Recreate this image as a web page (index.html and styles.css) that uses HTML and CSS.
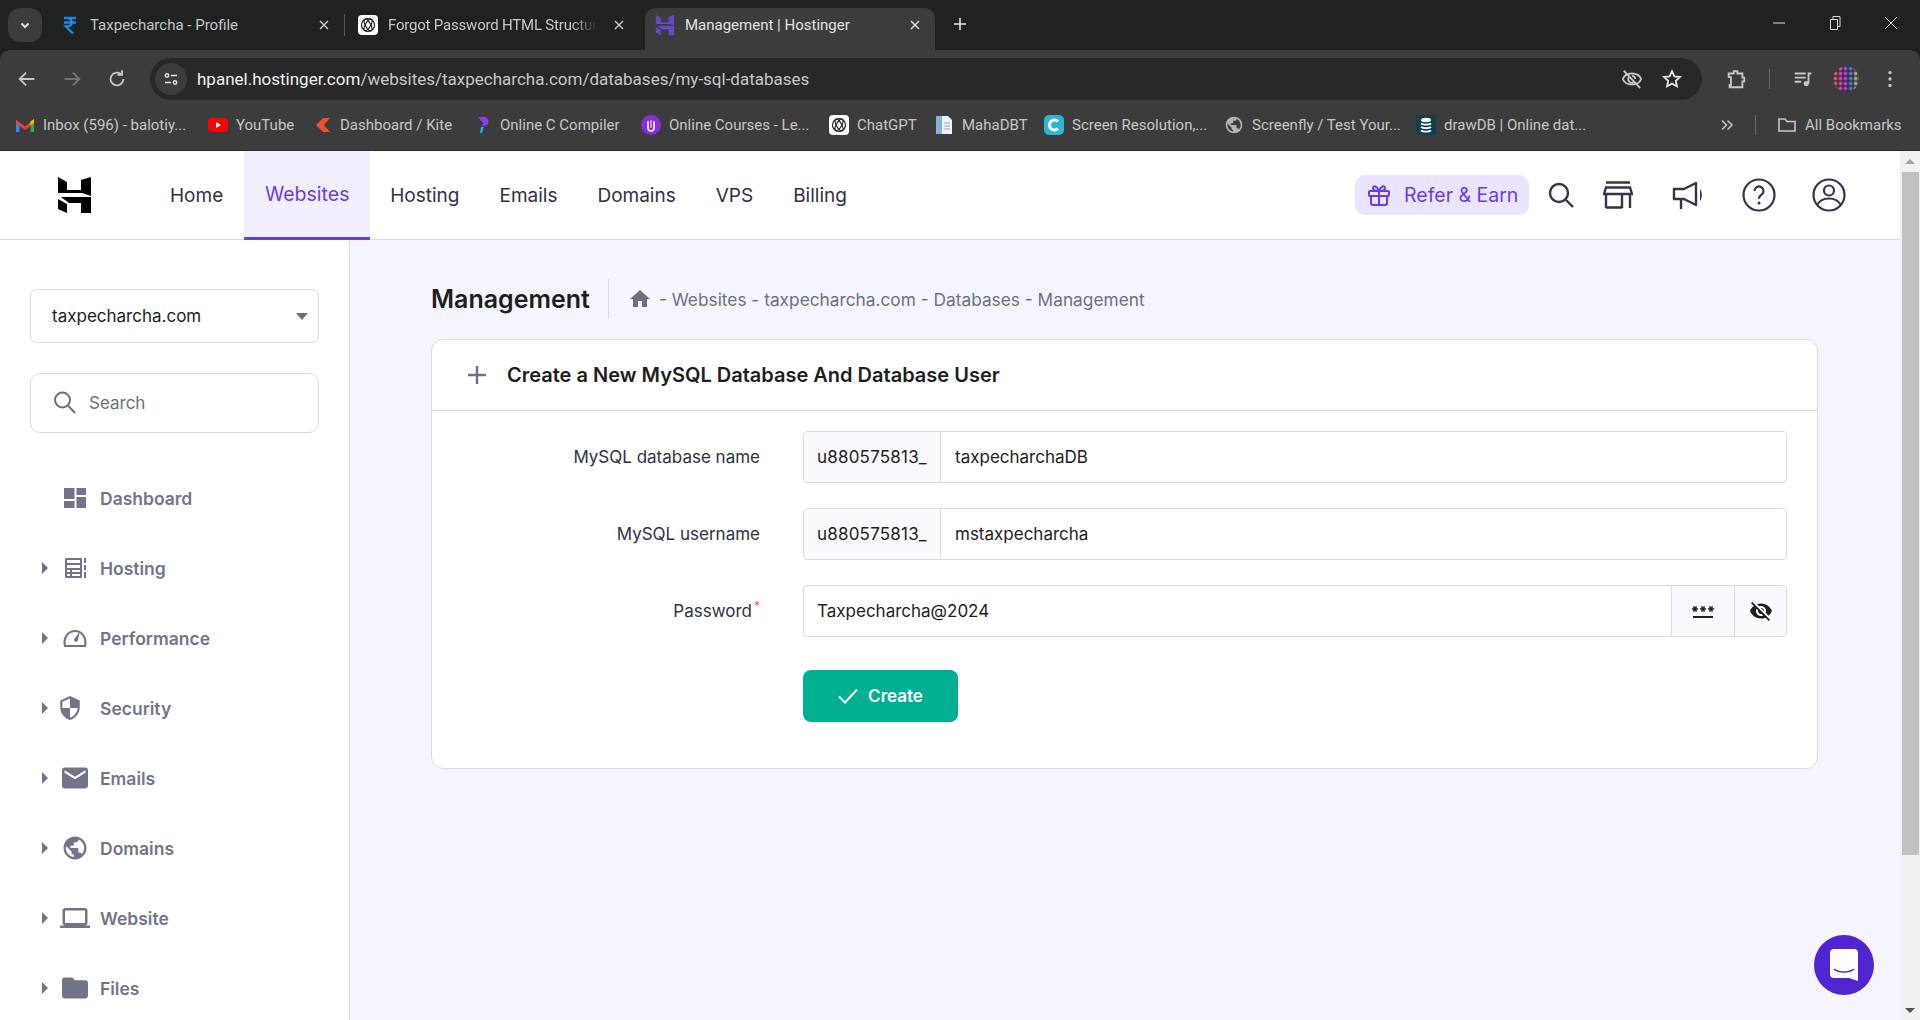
FILE: index.html
```
<!DOCTYPE html>
<html lang="en">

<head>
    <meta charset="UTF-8">
    <title>Management | Hostinger</title>
    <link rel="stylesheet" href="styles.css">
</head>

<body>

    <!-- browser chrome -->
    <div class="tabstrip">
        <button class="tab-search"><svg class="ico-12" viewBox="0 0 12 12"><path d="M2.500 4.500 6 8l3.500-3.500" fill="none" stroke="#e3e3e3" stroke-width="2"/></svg></button>
        <div class="tab tab-first">
            <svg class="rupee" viewBox="0 0 14 18"><path d="M1 2h12M1 6.500h12M4 2c6 0 7 8.500-1 8.500l7 7" fill="none" stroke="#1e88e5" stroke-width="2.400"/></svg>
            <span class="tab-title">Taxpecharcha - Profile</span>
            <svg class="tab-close" viewBox="0 0 12 12"><path d="M2 2l8 8M10 2l-8 8" stroke="#d0d0d0" stroke-width="1.400"/></svg>
        </div>
        <div class="tab-sep"></div>
        <div class="tab tab-second">
            <svg class="fav-20" viewBox="0 0 20 20"><rect width="20" height="20" rx="4" fill="#fff"/><g fill="none" stroke="#222" stroke-width="1.200"><circle cx="10" cy="10" r="6.500"/><ellipse cx="10" cy="10" rx="6.500" ry="2.600" transform="rotate(60 10 10)"/><ellipse cx="10" cy="10" rx="6.500" ry="2.600" transform="rotate(-60 10 10)"/></g></svg>
            <span class="tab-title tab-title-fade">Forgot Password HTML Structur</span>
            <svg class="tab-close" viewBox="0 0 12 12"><path d="M2 2l8 8M10 2l-8 8" stroke="#d0d0d0" stroke-width="1.400"/></svg>
        </div>
        <div class="tab tab-active">
            <svg class="fav-20" viewBox="0 0 33 36"><path d="M0 0l9 5v8h14V3l10-3v19l-9-3H0zM3 20h30v16H23V26H11zM0 22l9 5v9l-9-4z" fill="#6747c7"/></svg>
            <span class="tab-title">Management | Hostinger</span>
            <svg class="tab-close" viewBox="0 0 12 12"><path d="M2 2l8 8M10 2l-8 8" stroke="#e3e3e3" stroke-width="1.400"/></svg>
        </div>
        <svg class="new-tab" viewBox="0 0 14 14"><path d="M7 1v12M1 7h12" stroke="#e3e3e3" stroke-width="1.600"/></svg>
        <div class="win-controls">
            <svg class="ico-12" viewBox="0 0 12 12"><path d="M0 6h12" stroke="#ddd"/></svg>
            <svg class="ico-14" viewBox="0 0 14 14"><path d="M2.500 3.500h7v10h-7zM5 3.500V.5h7v10H9.500" fill="none" stroke="#ddd"/></svg>
            <svg class="ico-12" viewBox="0 0 12 12"><path d="M0 0l12 12M12 0L0 12" stroke="#ddd"/></svg>
        </div>
    </div>

    <div class="toolbar">
        <svg class="tool-ico tool-back" viewBox="0 0 24 24"><path d="M20 12H5M11 5l-7 7 7 7" fill="none" stroke="#c7c7c7" stroke-width="2"/></svg>
        <svg class="tool-ico tool-fwd" viewBox="0 0 24 24"><path d="M4 12h15M13 5l7 7-7 7" fill="none" stroke="#757575" stroke-width="2"/></svg>
        <svg class="tool-ico tool-reload" viewBox="0 0 24 24"><path d="M19 12a7 7 0 1 1-2.200-5.100M17.500 2.500v5h-5" fill="none" stroke="#c7c7c7" stroke-width="2"/></svg>
        <div class="omnibox">
            <span class="site-info"><svg class="ico-16" viewBox="0 0 16 16"><g fill="none" stroke="#e3e3e3" stroke-width="1.500"><circle cx="4" cy="4.500" r="1.700"/><path d="M8 4.500h6M2 11.500h6"/><circle cx="12" cy="11.500" r="1.700"/></g></svg></span>
            <span class="url"><b>hpanel.hostinger.com</b>/websites/taxpecharcha.com/databases/my-sql-databases</span>
            <svg class="tool-ico omni-eye" viewBox="0 0 24 24"><g fill="none" stroke="#c7c7c7" stroke-width="2"><path d="M2 12c3-8 17-8 20 0-3 8-17 8-20 0z"/><path d="M8.500 10a4 4 0 0 0 5.500 5.500M12 8.500a3.500 3.500 0 0 1 3.500 3.500"/><path d="M3 3l18 19"/></g></svg>
            <svg class="tool-ico omni-star" viewBox="0 0 24 24"><path d="M12 3.500l2.600 5.600 6.100.7-4.500 4.200 1.200 6L12 17l-5.400 3 1.200-6-4.500-4.200 6.100-.7z" fill="none" stroke="#e3e3e3" stroke-width="2"/></svg>
        </div>
        <svg class="tool-ico tool-ext" viewBox="0 0 24 24"><path d="M4 6h5.500V3.500h4V6H19v4.500h2v4h-2V21H5v-2.500h1.500V10H4z" fill="none" stroke="#c7c7c7" stroke-width="2"/></svg>
        <div class="tool-sep"></div>
        <svg class="tool-ico tool-media" viewBox="0 0 24 24"><path d="M3 6h12M3 10.500h12M3 15h7" stroke="#c7c7c7" stroke-width="2"/><path d="M17 6h4M18 6v11" stroke="#c7c7c7" stroke-width="2"/><circle cx="15.500" cy="17" r="2.800" fill="#c7c7c7"/></svg>
        <span class="avatar"></span>
        <svg class="tool-ico tool-dots" viewBox="0 0 24 24"><circle cx="12" cy="5" r="1.800" fill="#c7c7c7"/><circle cx="12" cy="12" r="1.800" fill="#c7c7c7"/><circle cx="12" cy="19" r="1.800" fill="#c7c7c7"/></svg>
    </div>

    <div class="bookmarks">
        <a class="bm bm-inbox"><svg class="fav-20" viewBox="0 0 20 20"><path d="M1 5v12h3.500V9z" fill="#4285f4"/><path d="M19 5v12h-3.500V9z" fill="#34a853"/><path d="M1 4.500l9 7 9-7v4l-9 6.500-9-6.500z" fill="#ea4335"/><path d="M15.500 6.500L19 4v4l-3.500 2.500z" fill="#fbbc04"/></svg><span>Inbox (596) - balotiy...</span></a>
        <a class="bm bm-yt"><svg class="fav-20" viewBox="0 0 20 20"><rect y="3" width="20" height="14" rx="4" fill="#f00"/><path d="M8 7l5 3-5 3z" fill="#fff"/></svg><span>YouTube</span></a>
        <a class="bm bm-kite"><svg class="fav-20" viewBox="0 0 20 20"><path d="M11 3h7l-6 7 6 7h-7l-7-7z" fill="#e8512a"/></svg><span>Dashboard / Kite</span></a>
        <a class="bm bm-c"><svg class="fav-20" viewBox="0 0 20 20"><path d="M6 2h6a4 4 0 0 1 0 9H9l3-3h-1L6 2z" fill="#8c3df0"/><path d="M9 12h3l-2 6H8z" fill="#2aa7f0"/></svg><span>Online C Compiler</span></a>
        <a class="bm bm-u"><svg class="fav-20" viewBox="0 0 20 20"><circle cx="10" cy="10" r="10" fill="#8a2be2"/><path d="M7 6v7a3 3 0 0 0 6 0V6" fill="none" stroke="#fff" stroke-width="1.600"/><path d="M10 5v8" stroke="#fff" stroke-width="1"/></svg><span>Online Courses - Le...</span></a>
        <a class="bm bm-gpt"><svg class="fav-20" viewBox="0 0 20 20"><rect width="20" height="20" rx="4" fill="#fff"/><g fill="none" stroke="#222" stroke-width="1.200"><circle cx="10" cy="10" r="6.500"/><ellipse cx="10" cy="10" rx="6.500" ry="2.600" transform="rotate(60 10 10)"/><ellipse cx="10" cy="10" rx="6.500" ry="2.600" transform="rotate(-60 10 10)"/></g></svg><span>ChatGPT</span></a>
        <a class="bm bm-maha"><svg class="fav-20" viewBox="0 0 20 20"><path d="M2 1h12l4 4v14H2z" fill="#eef2f7"/><path d="M2 1h6v18H2z" fill="#7fb2dc"/><path d="M10 8h6M10 11h6M10 14h6" stroke="#9aa7b5"/></svg><span>MahaDBT</span></a>
        <a class="bm bm-screen"><svg class="fav-20" viewBox="0 0 20 20"><rect width="20" height="20" rx="5" fill="#29b6d8"/><path d="M14 6.500a5 5 0 1 0 0 7" fill="none" stroke="#fff" stroke-width="3"/></svg><span>Screen Resolution,...</span></a>
        <a class="bm bm-fly"><svg class="fav-20" viewBox="0 0 24 24"><path d="M12 2a10 10 0 1 0 0 20 10 10 0 0 0 0-20zm-1 17.900A8 8 0 0 1 4.200 10.200L9 15v1c0 1.100.9 2 2 2zm6.900-2.500c-.3-.8-1-1.400-1.900-1.400h-1v-3c0-.6-.4-1-1-1H8v-2h2c.6 0 1-.4 1-1V7h2c1.100 0 2-.9 2-2v-.4a8 8 0 0 1 2.900 12.800z" fill="#b5b5b5"/></svg><span>Screenfly / Test Your...</span></a>
        <a class="bm bm-draw"><svg class="fav-20" viewBox="0 0 20 20"><rect width="20" height="20" fill="#123f4f"/><ellipse cx="10" cy="5" rx="5" ry="2.200" fill="#fff"/><path d="M5 8.500c2 1.600 8 1.600 10 0M5 12c2 1.600 8 1.600 10 0M5 15.500c2 1.600 8 1.600 10 0" fill="none" stroke="#fff" stroke-width="1.800"/></svg><span>drawDB | Online dat...</span></a>
        <svg class="bm-more" viewBox="0 0 14 14"><path d="M2 2.500L6.500 7 2 11.500M7.500 2.500L12 7l-4.500 4.500" fill="none" stroke="#c7c7c7" stroke-width="1.500"/></svg>
        <div class="bm-sep"></div>
        <a class="bm bm-all"><svg class="fav-20" viewBox="0 0 20 20"><path d="M2 4h6l2 2.500h8V16H2z" fill="none" stroke="#c7c7c7" stroke-width="1.600"/></svg><span>All Bookmarks</span></a>
    </div>

    <!-- page -->
    <div class="viewport">
        <div class="page">
            <header class="topbar">
                <svg class="logo" viewBox="0 0 33 36"><path d="M0 0l9 5v8h14V3l10-3v19l-9-3H0zM3 20h30v16H23V26H11zM0 22l9 5v9l-9-4z" fill="#000"/></svg>
                <nav class="main-nav">
                    <a>Home</a>
                    <a class="current">Websites</a>
                    <a>Hosting</a>
                    <a>Emails</a>
                    <a>Domains</a>
                    <a>VPS</a>
                    <a>Billing</a>
                </nav>
                <div class="top-actions">
                    <a class="refer">
                        <svg class="ico-24" viewBox="0 0 24 24"><g fill="none" stroke="#673de6" stroke-width="2"><rect x="2" y="8" width="20" height="5" rx="1"/><path d="M4 13v7a2 2 0 0 0 2 2h12a2 2 0 0 0 2-2v-7M12 8v14M12 8C10 3 6 2 6 5c0 2 3 3 6 3zm0 0c2-5 6-6 6-3 0 2-3 3-6 3z"/></g></svg>
                        Refer &amp; Earn
                    </a>
                    <svg class="act act-search" viewBox="0 0 26 26"><g fill="none" stroke="#36344d" stroke-width="2.400"><circle cx="11" cy="11" r="9"/><path d="M18 18l7 7"/></g></svg>
                    <svg class="act act-store" viewBox="0 0 30 28"><g fill="none" stroke="#36344d" stroke-width="2.400"><path d="M3 1.500h24M3 6.500h24l2 6.500H1zM3 13v14M27 13v14M3 26.500h16M19 13v14"/></g></svg>
                    <svg class="act act-mega" viewBox="0 0 32 30"><g fill="none" stroke="#36344d" stroke-width="2.400" stroke-linejoin="round"><path d="M2 9h10l12-6v22l-12-6H2zM9 19v10"/></g><path d="M28 9c2.500 3 2.500 9 0 12z" fill="#36344d"/></svg>
                    <svg class="act act-help" viewBox="0 0 34 34"><circle cx="17" cy="17" r="15.500" fill="none" stroke="#36344d" stroke-width="2.200"/><path d="M12.500 13a4.500 4.500 0 1 1 7 3.700c-1.700 1.100-2.500 2-2.500 4" fill="none" stroke="#36344d" stroke-width="2.200"/><circle cx="17" cy="25" r="1.500" fill="#36344d"/></svg>
                    <svg class="act act-user" viewBox="0 0 34 34"><g fill="none" stroke="#36344d" stroke-width="2.200"><circle cx="17" cy="17" r="15.500"/><circle cx="17" cy="12.500" r="5"/><path d="M5 27c3-5 8-6.500 12-6.500S26 22 29 27"/></g></svg>
                </div>
            </header>

            <div class="layout">
                <aside class="sidebar">
                    <div class="domain-select">
                        <span>taxpecharcha.com</span>
                        <i class="caret-down"></i>
                    </div>
                    <div class="side-search">
                        <svg class="ico-24" viewBox="0 0 24 24"><g fill="none" stroke="#6d7081" stroke-width="2"><circle cx="9.500" cy="9" r="7.500"/><path d="M15 14.500l7 7.500"/></g></svg>
                        <span>Search</span>
                    </div>
                    <ul class="side-menu">
                        <li><i class="caret-none"></i><svg class="side-ico" viewBox="0 0 24 24"><path d="M1 2h10.500v11H1zM1 15h10.500v7H1zM13.500 2H23v7h-9.500zM13.500 11H23v11h-9.500z"/></svg>Dashboard</li>
                        <li><i class="caret-right"></i><svg class="side-ico" viewBox="0 0 24 24"><path fill-rule="evenodd" d="M3 2h15a1 1 0 0 1 1 1v18a1 1 0 0 1-1 1H3a1 1 0 0 1-1-1V3a1 1 0 0 1 1-1zm1 2v3h13V4zm0 5v3h13V9zm0 5v2h3v-2zm5 0v2h8v-2zm-5 4v2h3v-2zm5 0v2h8v-2zM21 2h2v5h-2zm0 7h2v5h-2zm0 7h2v6h-2z"/></svg>Hosting</li>
                        <li><i class="caret-right"></i><svg class="side-ico" viewBox="0 0 24 24"><path d="M17 5l-5 7a2 2 0 1 0 3 2z"/><path d="M2 21h20c2-8-3-15-10-15S0 13 2 21z" transform="translate(0 -1)" fill="none" stroke="#72758a" stroke-width="2.200"/></svg>Performance</li>
                        <li class="shift"><i class="caret-right"></i><svg class="side-ico" viewBox="0 0 24 24"><path d="M12 1L3 5v6c0 5.550 3.840 10.740 9 12 5.160-1.260 9-6.450 9-12V5l-9-4zm0 10.990h7c-.53 4.120-3.280 7.790-7 8.940V12H5V6.300l7-3.110v8.800z"/></svg>Security</li>
                        <li><i class="caret-right"></i><svg class="side-ico" viewBox="2 3 20 18"><path d="M20 4H4c-1.100 0-1.990.9-1.990 2L2 18c0 1.100.9 2 2 2h16c1.100 0 2-.9 2-2V6c0-1.100-.9-2-2-2zm0 4l-8 5-8-5V6l8 5 8-5v2z"/></svg>Emails</li>
                        <li><i class="caret-right"></i><svg class="side-ico" viewBox="1.500 1.500 21 21"><path d="M12 2C6.480 2 2 6.480 2 12s4.480 10 10 10 10-4.480 10-10S17.520 2 12 2zm-1 17.930c-3.950-.49-7-3.850-7-7.930 0-.62.08-1.210.21-1.790L9 15v1c0 1.100.9 2 2 2v1.930zm6.900-2.540c-.26-.81-1-1.390-1.900-1.390h-1v-3c0-.55-.45-1-1-1H8v-2h2c.55 0 1-.45 1-1V7h2c1.100 0 2-.9 2-2v-.41c2.930 1.190 5 4.060 5 7.410 0 2.080-.8 3.970-2.100 5.390z"/></svg>Domains</li>
                        <li><i class="caret-right"></i><svg class="side-ico side-ico-wide" viewBox="0 3 24 18"><path d="M20 18c1.100 0 1.990-.9 1.990-2L22 6c0-1.100-.9-2-2-2H4c-1.100 0-2 .9-2 2v10c0 1.100.9 2 2 2H0v2h24v-2h-4zM4 6h16v10H4V6z"/></svg>Website</li>
                        <li><i class="caret-right"></i><svg class="side-ico" viewBox="2 3 20 18"><path d="M10 4H4c-1.100 0-1.990.9-1.990 2L2 18c0 1.100.9 2 2 2h16c1.100 0 2-.9 2-2V8c0-1.100-.9-2-2-2h-8l-2-2z"/></svg>Files</li>
                    </ul>
                </aside>

                <main class="content">
                    <div class="page-head">
                        <h1>Management</h1>
                        <div class="crumbs">
                            <svg class="ico-24" viewBox="0 0 24 24"><path d="M10 20v-6h4v6h5v-8h3L12 3 2 12h3v8z" fill="#6d7081"/></svg>
                            <span>- Websites - taxpecharcha.com - Databases - Management</span>
                        </div>
                    </div>

                    <section class="card">
                        <div class="card-head">
                            <svg class="plus" viewBox="0 0 18 18"><path d="M9 0v18M0 9h18" stroke="#6d7081" stroke-width="2.400"/></svg>
                            <h2>Create a New MySQL Database And Database User</h2>
                        </div>
                        <form class="card-body">
                            <div class="form-row">
                                <label>MySQL database name</label>
                                <div class="field">
                                    <span class="prefix">u880575813_</span>
                                    <span class="value">taxpecharchaDB</span>
                                </div>
                            </div>
                            <div class="form-row">
                                <label>MySQL username</label>
                                <div class="field">
                                    <span class="prefix">u880575813_</span>
                                    <span class="value">mstaxpecharcha</span>
                                </div>
                            </div>
                            <div class="form-row">
                                <label>Password<sup>*</sup></label>
                                <div class="field">
                                    <span class="value value-pass">Taxpecharcha@2024</span>
                                    <span class="addon addon-gen"><svg class="ico-24" viewBox="0 0 24 24"><path fill="#1d1e20" d="M2 17h20v2H2v-2zm1.150-4.050L4 11.470l.85 1.480 1.300-.75-.85-1.480H7v-1.500H5.300l.85-1.470L4.850 7 4 8.470 3.150 7l-1.300.75.85 1.470H1v1.500h1.700l-.85 1.480 1.300.75zm6.700-.75l1.300.75.85-1.480.85 1.480 1.300-.75-.85-1.480H15v-1.500h-1.700l.85-1.470-1.300-.75L12 8.470 11.150 7l-1.300.75.85 1.470H9v1.500h1.700l-.85 1.480zM23 9.220h-1.700l.85-1.470-1.300-.75L20 8.470 19.150 7l-1.300.75.85 1.470H17v1.500h1.700l-.85 1.480 1.300.75.85-1.480.85 1.480 1.300-.75-.85-1.480H23v-1.500z"/></svg></span>
                                    <span class="addon addon-eye"><svg class="ico-24" viewBox="0 0 24 24"><path fill="#1d1e20" d="M12 7c2.760 0 5 2.240 5 5 0 .65-.13 1.260-.36 1.830l2.920 2.920c1.510-1.260 2.700-2.890 3.430-4.750-1.730-4.390-6-7.500-11-7.500-1.400 0-2.740.25-3.980.7l2.160 2.160C10.740 7.130 11.350 7 12 7zM2 4.270l2.280 2.280.46.46C3.080 8.300 1.780 10.020 1 12c1.730 4.390 6 7.500 11 7.500 1.550 0 3.030-.3 4.380-.84l.42.42L19.730 22 21 20.730 3.270 3 2 4.270zM7.530 9.800l1.550 1.550c-.05.21-.08.43-.08.65 0 1.660 1.340 3 3 3 .22 0 .44-.03.65-.08l1.550 1.550c-.67.33-1.410.53-2.200.53-2.760 0-5-2.240-5-5 0-.79.2-1.530.53-2.200zm4.310-.78l3.150 3.150.02-.16c0-1.660-1.340-3-3-3l-.17.01z"/></svg></span>
                                </div>
                            </div>
                            <button type="button" class="btn-create">
                                <svg class="check" viewBox="0 0 20 16"><path d="M1 8.500L7 14.500 19 1.500" fill="none" stroke="#fff" stroke-width="2"/></svg>
                                Create
                            </button>
                        </form>
                    </section>
                </main>
            </div>

            <a class="chat-btn" title="Chat">
                <svg viewBox="0 0 28 32" class="chat-ico"><path d="M4 0h20a4 4 0 0 1 4 4v28l-9-3H4a4 4 0 0 1-4-4V4a4 4 0 0 1 4-4z" fill="#fff"/><path d="M4 20c5 4 15 4 20 0" fill="none" stroke="#5025d1" stroke-width="1.600"/></svg>
            </a>
        </div>

        <div class="scrollbar">
            <i class="arrow-up"></i>
            <div class="thumb"></div>
            <i class="arrow-down"></i>
        </div>
    </div>

</body>

</html>
```

FILE: styles.css
```
* {
    box-sizing: border-box;
}

html,
body {
    margin: 0;
    height: 1020px;
    overflow: hidden;
}

body {
    font-family: Roboto, "Liberation Sans", sans-serif;
    background-color: #202221;
    color: #1d1e20;
}

.ico-12 {
    width: 12px;
    height: 12px;
}

.ico-14 {
    width: 14px;
    height: 14px;
}

.ico-16 {
    width: 16px;
    height: 16px;
}

.ico-24 {
    width: 24px;
    height: 24px;
    flex: none;
}

.fav-20 {
    width: 20px;
    height: 20px;
    flex: none;
}

/* tab strip */
.tabstrip {
    height: 50px;
    display: flex;
    align-items: flex-end;
    background-color: #202221;
    position: relative;
}

.tab-search {
    width: 34px;
    height: 34px;
    margin: 0 0 8px 8px;
    border: none;
    border-radius: 12px;
    background-color: #3c3c3c;
    display: flex;
    align-items: center;
    justify-content: center;
    padding: 0;
}

.tab {
    height: 42px;
    padding-bottom: 8px;
    display: flex;
    align-items: center;
    font-size: 15px;
    color: #c7c7c7;
    flex: none;
}

.tab-first {
    width: 302px;
    padding-left: 21px;
}

.tab-second {
    width: 300px;
    padding-left: 13px;
}

.tab-active {
    width: 290px;
    padding-left: 10px;
    background-color: #3c3c3c;
    border-radius: 10px 10px 0 0;
    color: #e3e3e3;
}

.tab-sep {
    width: 1px;
    height: 22px;
    background-color: #555;
    margin-bottom: 14px;
    flex: none;
}

.rupee {
    width: 14px;
    height: 18px;
    flex: none;
}

.tab-title {
    margin-left: 13px;
    white-space: nowrap;
    flex: 1;
}

.tab-second .tab-title,
.tab-active .tab-title {
    margin-left: 10px;
}

.tab-title-fade {
    letter-spacing: -0.2px;
    -webkit-mask-image: linear-gradient(to right, #000 88%, transparent 100%);
}

.tab-close {
    width: 12px;
    height: 12px;
    flex: none;
    margin: 0 14px;
}

.tab-second .tab-close {
    margin: 0 21px 0 16px;
}

.new-tab {
    width: 14px;
    height: 14px;
    margin: 0 0 19px 18px;
}

.win-controls {
    margin-left: auto;
    display: flex;
    align-items: center;
    gap: 43px;
    padding: 0 23px 20px 0;
}

/* toolbar */
.toolbar {
    height: 50px;
    padding-top: 8px;
    display: flex;
    align-items: center;
    background-color: #3c3c3c;
    border-radius: 10px 10px 0 0;
}

.tool-ico {
    width: 22px;
    height: 22px;
    flex: none;
}

.tool-back {
    margin-left: 16px;
}

.tool-fwd {
    margin-left: 23px;
}

.tool-reload {
    margin-left: 23px;
}

.omnibox {
    width: 1552px;
    height: 42px;
    margin-left: 22px;
    border-radius: 21px;
    background-color: #282828;
    display: flex;
    align-items: center;
    padding-left: 5px;
    flex: none;
}

.site-info {
    width: 32px;
    height: 32px;
    border-radius: 50%;
    background-color: #3c3c3c;
    display: flex;
    align-items: center;
    justify-content: center;
    flex: none;
}

.url {
    margin-left: 10px;
    font-size: 17px;
    color: #c7c7c7;
    white-space: nowrap;
    flex: 1;
}

.url b {
    font-weight: 400;
    color: #f0f0f0;
}

.omni-star {
    margin: 0 19px 0 18px;
}

.tool-ext {
    margin-left: 23px;
}

.tool-sep {
    width: 1px;
    height: 20px;
    background-color: #666;
    margin: 0 22px;
    flex: none;
}

.avatar {
    width: 26px;
    height: 26px;
    margin-left: 19px;
    border-radius: 50%;
    flex: none;
    background:
        radial-gradient(circle, transparent 1px, rgba(30, 30, 30, 0.75) 2.500px) 0 0 / 5px 5px,
        linear-gradient(90deg, #c86a4a, #d13ad1 40%, #4a6fd1 65%, #d6cf4a);
}

.tool-dots {
    margin-left: 20px;
}

/* bookmarks */
.bookmarks {
    height: 51px;
    display: flex;
    align-items: center;
    padding: 0 17px 0 15px;
    background-color: #3c3c3c;
    color: #c7c7c7;
    font-size: 15px;
    white-space: nowrap;
    border-bottom: 1px solid #2a2a2a;
}

.bm {
    display: flex;
    align-items: center;
    gap: 8px;
    flex: none;
}

.bm-inbox {
    width: 193px;
}

.bm-yt {
    width: 104px;
}

.bm-kite {
    width: 160px;
}

.bm-c {
    width: 169px;
}

.bm-u {
    width: 188px;
}

.bm-gpt {
    width: 105px;
}

.bm-maha {
    width: 110px;
}

.bm-screen {
    width: 180px;
}

.bm-fly {
    width: 192px;
}

.bm-draw {
    width: 304px;
}

.bm-more {
    width: 14px;
    height: 14px;
    flex: none;
}

.bm-sep {
    width: 1px;
    height: 20px;
    background-color: #666;
    margin: 0 21px;
    flex: none;
}

/* page */
.viewport {
    height: 869px;
    display: flex;
    background-color: #f4f5ff;
}

.page {
    flex: 1;
    min-width: 0;
    position: relative;
    display: flex;
    flex-direction: column;
    font-family: Inter, Roboto, sans-serif;
}

.topbar {
    height: 89px;
    display: flex;
    align-items: center;
    background-color: #fff;
    border-bottom: 1px solid #dadce0;
    padding: 0 54px 0 58px;
    flex: none;
}

.logo {
    width: 33px;
    height: 36px;
    flex: none;
}

.main-nav {
    display: flex;
    align-self: stretch;
    margin-left: 59px;
}

.main-nav a {
    display: flex;
    align-items: center;
    padding: 0 20px;
    margin-bottom: -1px;
    font-size: 19px;
    color: #2f3147;
}

.main-nav a.current {
    width: 126px;
    margin-left: 1px;
    justify-content: center;
    padding: 0;
    font-size: 19.500px;
    background-color: #f1effd;
    color: #673de6;
    border-bottom: 3px solid #673de6;
}

.top-actions {
    margin-left: auto;
    display: flex;
    align-items: center;
}

.refer {
    width: 174px;
    height: 40px;
    border-radius: 10px;
    background-color: #ebe4ff;
    color: #673de6;
    font-size: 19.500px;
    display: flex;
    align-items: center;
    gap: 13px;
    padding-left: 12px;
    white-space: nowrap;
}

.act {
    flex: none;
}

.act-search {
    width: 26px;
    height: 26px;
    margin-left: 19px;
}

.act-store {
    width: 30px;
    height: 28px;
    margin-left: 29px;
}

.act-mega {
    width: 34px;
    height: 30px;
    margin-left: 38px;
}

.act-help {
    width: 34px;
    height: 34px;
    margin-left: 37px;
}

.act-user {
    width: 34px;
    height: 34px;
    margin-left: 36px;
}

.layout {
    flex: 1;
    min-height: 0;
    display: flex;
}

/* sidebar */
.sidebar {
    width: 350px;
    flex: none;
    background-color: #fff;
    border-right: 1px solid #dadce0;
    padding: 49px 30px 0;
}

.domain-select {
    height: 54px;
    border: 1px solid #dadce0;
    border-radius: 6px;
    display: flex;
    align-items: center;
    justify-content: space-between;
    padding: 0 10px 0 21px;
    font-size: 17px;
    color: #1d1e20;
}

.caret-down {
    width: 0;
    height: 0;
    border-left: 6px solid transparent;
    border-right: 6px solid transparent;
    border-top: 7px solid #6d7081;
}

.side-search {
    height: 60px;
    margin-top: 30px;
    border: 1px solid #dadce0;
    border-radius: 10px;
    display: flex;
    align-items: center;
    gap: 12px;
    padding-left: 22px;
    font-size: 17px;
    color: #6d7081;
}

.side-menu {
    list-style: none;
    margin: 30px 0 0;
    padding: 0;
}

.side-menu li {
    height: 70px;
    display: flex;
    align-items: center;
    font-size: 17.500px;
    font-weight: 600;
    color: #72758a;
    margin-left: 12px;
}

.caret-right,
.caret-none {
    width: 6px;
    height: 12px;
    flex: none;
    margin-right: 14px;
}

.caret-right {
    border-left: 6px solid #72758a;
    border-top: 6px solid transparent;
    border-bottom: 6px solid transparent;
}

.side-ico {
    width: 26px;
    height: 24px;
    margin-right: 12px;
    flex: none;
    fill: #72758a;
}

.side-ico-wide {
    width: 30px;
    margin: 0 10px 0 -2px;
}

.side-menu .shift .side-ico {
    margin: 0 17px 0 -5px;
    height: 28px;
}

/* main */
.content {
    flex: 1;
    min-width: 0;
    padding: 39px 82px 0 81px;
}

.page-head {
    height: 40px;
    display: flex;
    align-items: center;
    margin-bottom: 20px;
}

.page-head h1 {
    margin: 0;
    padding-right: 18px;
    height: 40px;
    line-height: 40px;
    font-size: 25px;
    font-weight: 600;
    border-right: 1px solid #dadce0;
}

.crumbs {
    display: flex;
    align-items: center;
    gap: 7px;
    margin-left: 19px;
    font-size: 17.300px;
    color: #6d7081;
    white-space: nowrap;
}

.card {
    background-color: #fff;
    border: 1px solid #dadce0;
    border-radius: 12px;
}

.card-head {
    height: 71px;
    display: flex;
    align-items: center;
    padding-left: 36px;
    border-bottom: 1px solid #dadce0;
}

.plus {
    width: 18px;
    height: 18px;
    margin-right: 21px;
}

.card-head h2 {
    margin: 0;
    font-size: 20px;
    font-weight: 600;
}

.card-body {
    padding: 20px 30px 46px 0;
}

.form-row {
    display: flex;
    align-items: center;
    margin-bottom: 25px;
}

.form-row label {
    width: 328px;
    text-align: right;
    font-size: 17px;
    color: #2f3147;
    margin-right: 43px;
    flex: none;
}

.form-row sup {
    color: #fc5185;
    font-size: 12px;
    line-height: 0;
    margin-left: 2px;
}

.field {
    flex: 1;
    height: 52px;
    display: flex;
    align-items: stretch;
    border: 1px solid #dadce0;
    border-radius: 4px;
    font-size: 17px;
    overflow: hidden;
}

.prefix {
    width: 137px;
    flex: none;
    display: flex;
    align-items: center;
    padding-left: 13px;
    letter-spacing: 0.2px;
    background-color: #f9f9fe;
    border-right: 1px solid #dadce0;
}

.value {
    flex: 1;
    display: flex;
    align-items: center;
    padding-left: 14px;
}

.value-pass {
    padding-left: 13px;
}

.addon {
    flex: none;
    display: flex;
    align-items: center;
    justify-content: center;
    background-color: #f9f9fe;
    border-left: 1px solid #dadce0;
}

.addon-gen {
    width: 63px;
}

.addon-eye {
    width: 52px;
}

.btn-create {
    margin: 33px 0 0 371px;
    width: 155px;
    height: 52px;
    border: none;
    border-radius: 8px;
    background-color: #00b090;
    color: #fff;
    font-family: inherit;
    font-size: 17px;
    font-weight: 600;
    display: flex;
    align-items: center;
    justify-content: center;
    gap: 10px;
}

.check {
    width: 20px;
    height: 16px;
}

/* chat */
.chat-btn {
    position: absolute;
    right: 26px;
    bottom: 25px;
    width: 60px;
    height: 60px;
    border-radius: 50%;
    background-color: #5025d1;
    display: flex;
    align-items: center;
    justify-content: center;
}

.chat-ico {
    width: 28px;
    height: 32px;
}

/* scrollbar */
.scrollbar {
    width: 20px;
    flex: none;
    background-color: #f1f1f1;
    display: flex;
    flex-direction: column;
    align-items: center;
    padding: 8px 0 7px;
}

.thumb {
    width: 17px;
    height: 683px;
    margin-top: 8px;
    background-color: #c1c1c1;
}

.arrow-up,
.arrow-down {
    width: 0;
    height: 0;
    border-left: 5px solid transparent;
    border-right: 5px solid transparent;
}

.arrow-up {
    border-bottom: 5px solid #a3a3a3;
}

.arrow-down {
    margin-top: auto;
    border-top: 5px solid #505050;
}
```
